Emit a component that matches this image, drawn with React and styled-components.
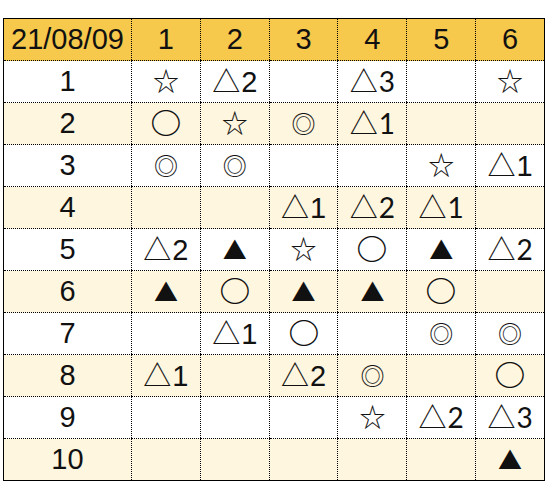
import React from 'react'
import styled, { createGlobalStyle } from 'styled-components'

const GlobalStyle = createGlobalStyle`
  body {
    margin: 0;
    background: #fff;
    font-family: "Liberation Sans", Arial, sans-serif;
  }
`

const Sheet = styled.table`
  margin: 18px 0 0 3px;
  border-collapse: collapse;
  border: 1.5px solid #000;
  table-layout: fixed;
  width: 542px;
`

const HeadCell = styled.th`
  background: #f6c84c;
  height: 41px;
  padding: 0;
  font-weight: normal;
  font-size: 29px;
  color: #111;
  text-align: center;
  border-left: 1px dotted #000;
  border-bottom: 1px dotted #000;
  width: ${p => (p.$first ? '127px' : 'auto')};
`

const Row = styled.tr`
  background: ${p => (p.$alt ? '#fff6df' : '#fff')};
`

const Cell = styled.td`
  height: 41px;
  padding: 0;
  text-align: center;
  font-size: 29px;
  line-height: 1;
  color: #111;
  border-left: 1px dotted #000;
  border-bottom: 1px dotted #000;
  white-space: nowrap;
`

const glyphs = {
  '○': { size: 28, weight: 700, scale: 1.1 },
  '◎': { size: 24, weight: 400, scale: 1 },
  '☆': { size: 26, weight: 400, scale: 1 },
  '△': { size: 28, weight: 400, scale: 1 },
  '▲': { size: 24, weight: 400, scale: 1 },
}

const Sym = styled.span`
  display: inline-block;
  font-family: "Noto Sans CJK JP", sans-serif;
  font-size: ${p => p.$g.size}px;
  font-weight: ${p => p.$g.weight};
  line-height: 1;
  transform: scaleX(${p => p.$g.scale});
`

const Num = styled.span`
  font-family: ${p => (p.$narrow ? 'Lato, "Noto Sans", sans-serif' : '"Liberation Sans", Arial, sans-serif')};
  font-size: ${p => (p.$narrow ? '28px' : '29px')};
  margin-left: 1px;
`

// '*' at the end marks a cell whose number is in the narrower face
const rows = [
  ['☆', '△2', '', '△3*', '', '☆'],
  ['○', '☆', '◎', '△1*', '', ''],
  ['◎', '◎', '', '', '☆', '△1'],
  ['', '', '△1', '△2*', '△1*', ''],
  ['△2', '▲', '☆', '○', '▲', '△2*'],
  ['▲', '○', '▲', '▲', '○', ''],
  ['', '△1', '○', '', '◎', '◎'],
  ['△1', '', '△2', '◎', '', '○'],
  ['', '', '', '☆', '△2*', '△3*'],
  ['', '', '', '', '', '▲'],
]

const Mark = ({ value }) => {
  if (!value) return null
  const narrow = value.endsWith('*')
  const text = narrow ? value.slice(0, -1) : value
  const glyph = text[0]
  const num = text.slice(1)
  return (
    <>
      <Sym $g={glyphs[glyph]}>{glyph}</Sym>
      {num && <Num $narrow={narrow}>{num}</Num>}
    </>
  )
}

export default function App() {
  return (
    <>
      <GlobalStyle />
      <Sheet>
        <thead>
          <tr>
            <HeadCell $first>21/08/09</HeadCell>
            {[1, 2, 3, 4, 5, 6].map(n => (
              <HeadCell key={n}>{n}</HeadCell>
            ))}
          </tr>
        </thead>
        <tbody>
          {rows.map((r, i) => (
            <Row key={i} $alt={i % 2 === 1}>
              <Cell>{i + 1}</Cell>
              {r.map((v, j) => (
                <Cell key={j}>
                  <Mark value={v} />
                </Cell>
              ))}
            </Row>
          ))}
        </tbody>
      </Sheet>
    </>
  )
}
